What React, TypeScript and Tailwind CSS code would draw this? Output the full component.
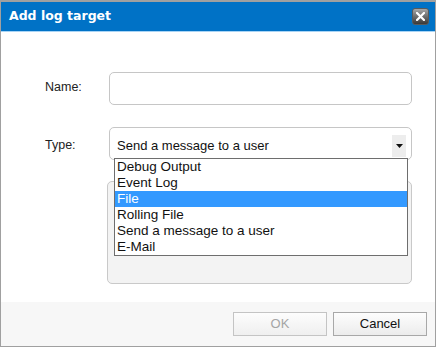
import { useState } from 'react';

const items = ['Debug Output', 'Event Log', 'File', 'Rolling File', 'Send a message to a user', 'E-Mail'];

export default function App() {
  const [sel] = useState(2);

  return (
    <div className="w-[437px] h-[347px] bg-white font-['Liberation_Sans',Arial,sans-serif]">
      <div className="relative w-[436px] h-[347px] border border-[#a0a0a0] border-t-2 flex flex-col bg-white">
        {/* title bar */}
        <div className="h-[30px] bg-[#0072c6] border-b border-[#a8d4f5] flex items-center justify-between pl-[8px] pr-[6px]">
          <span className="text-white font-bold text-[12.5px] font-['DejaVu_Sans',Verdana,sans-serif] pb-[1px]">Add log target</span>
          <button className="w-[17px] h-[17px] rounded-[3px] bg-gradient-to-b from-[#a8a8a8] to-[#3a3a3a] border border-[#5a5a5a] flex items-center justify-center mb-[1px]">
            <svg width="9" height="9" viewBox="0 0 9 9">
              <path d="M1 1 L8 8 M8 1 L1 8" stroke="white" strokeWidth="2.2" strokeLinecap="square" />
            </svg>
          </button>
        </div>

        {/* body */}
        <div className="flex-1 relative flex flex-col pt-[40px] pl-[44px]">
          <div className="flex items-center">
            <span className="w-[64px] text-[12.5px] text-[#222] pb-[2px]">Name:</span>
            <div className="w-[303px] h-[33px] border border-[#c6c6c6] rounded-[5px] bg-white" />
          </div>

          <div className="flex items-center mt-[22px]">
            <span className="w-[64px] text-[12.5px] text-[#222] pt-[4px]">Type:</span>
            <div className="w-[303px] h-[33px] border border-[#c6c6c6] rounded-[5px] bg-white flex items-center justify-between pl-[7px] pr-[5px]">
              <span className="text-[13px] text-[#111] pt-[4px]">Send a message to a user</span>
              <div className="w-[14px] h-[22px] bg-[#ededed] flex items-center justify-center mt-[4px]">
                <svg width="7" height="4" viewBox="0 0 7 4">
                  <path d="M0 0 H7 L3.5 4 Z" fill="#111" />
                </svg>
              </div>
            </div>
          </div>

          <div className="ml-[62px] mt-[21px] w-[305px] h-[103px] bg-[#f3f3f3] border border-[#c9c9c9] rounded-[5px]" />

          {/* open dropdown list */}
          <div className="absolute left-[113px] top-[126px] w-[294px] border border-[#6e6e6e] bg-white">
            {items.map((it, i) => (
              <div
                key={it}
                className={
                  'h-[16px] leading-[16px] pl-[2px] text-[13.5px] ' +
                  (i === sel ? 'bg-[#3399ff] text-white' : 'text-[#111]')
                }
              >
                {it}
              </div>
            ))}
          </div>
        </div>

        {/* footer */}
        <div className="h-[44px] bg-[#f7f7f7] flex items-start justify-end gap-[6px] pt-[10px] pr-[8px]">
          <button className="w-[94px] h-[24px] border border-[#c4c4c4] bg-gradient-to-b from-[#fdfdfd] to-[#efefef] text-[13px] text-[#a5a5a5]">OK</button>
          <button className="w-[94px] h-[24px] border border-[#a8a8a8] bg-gradient-to-b from-[#fdfdfd] to-[#ececec] text-[13px] text-[#111]">Cancel</button>
        </div>
      </div>
    </div>
  );
}
